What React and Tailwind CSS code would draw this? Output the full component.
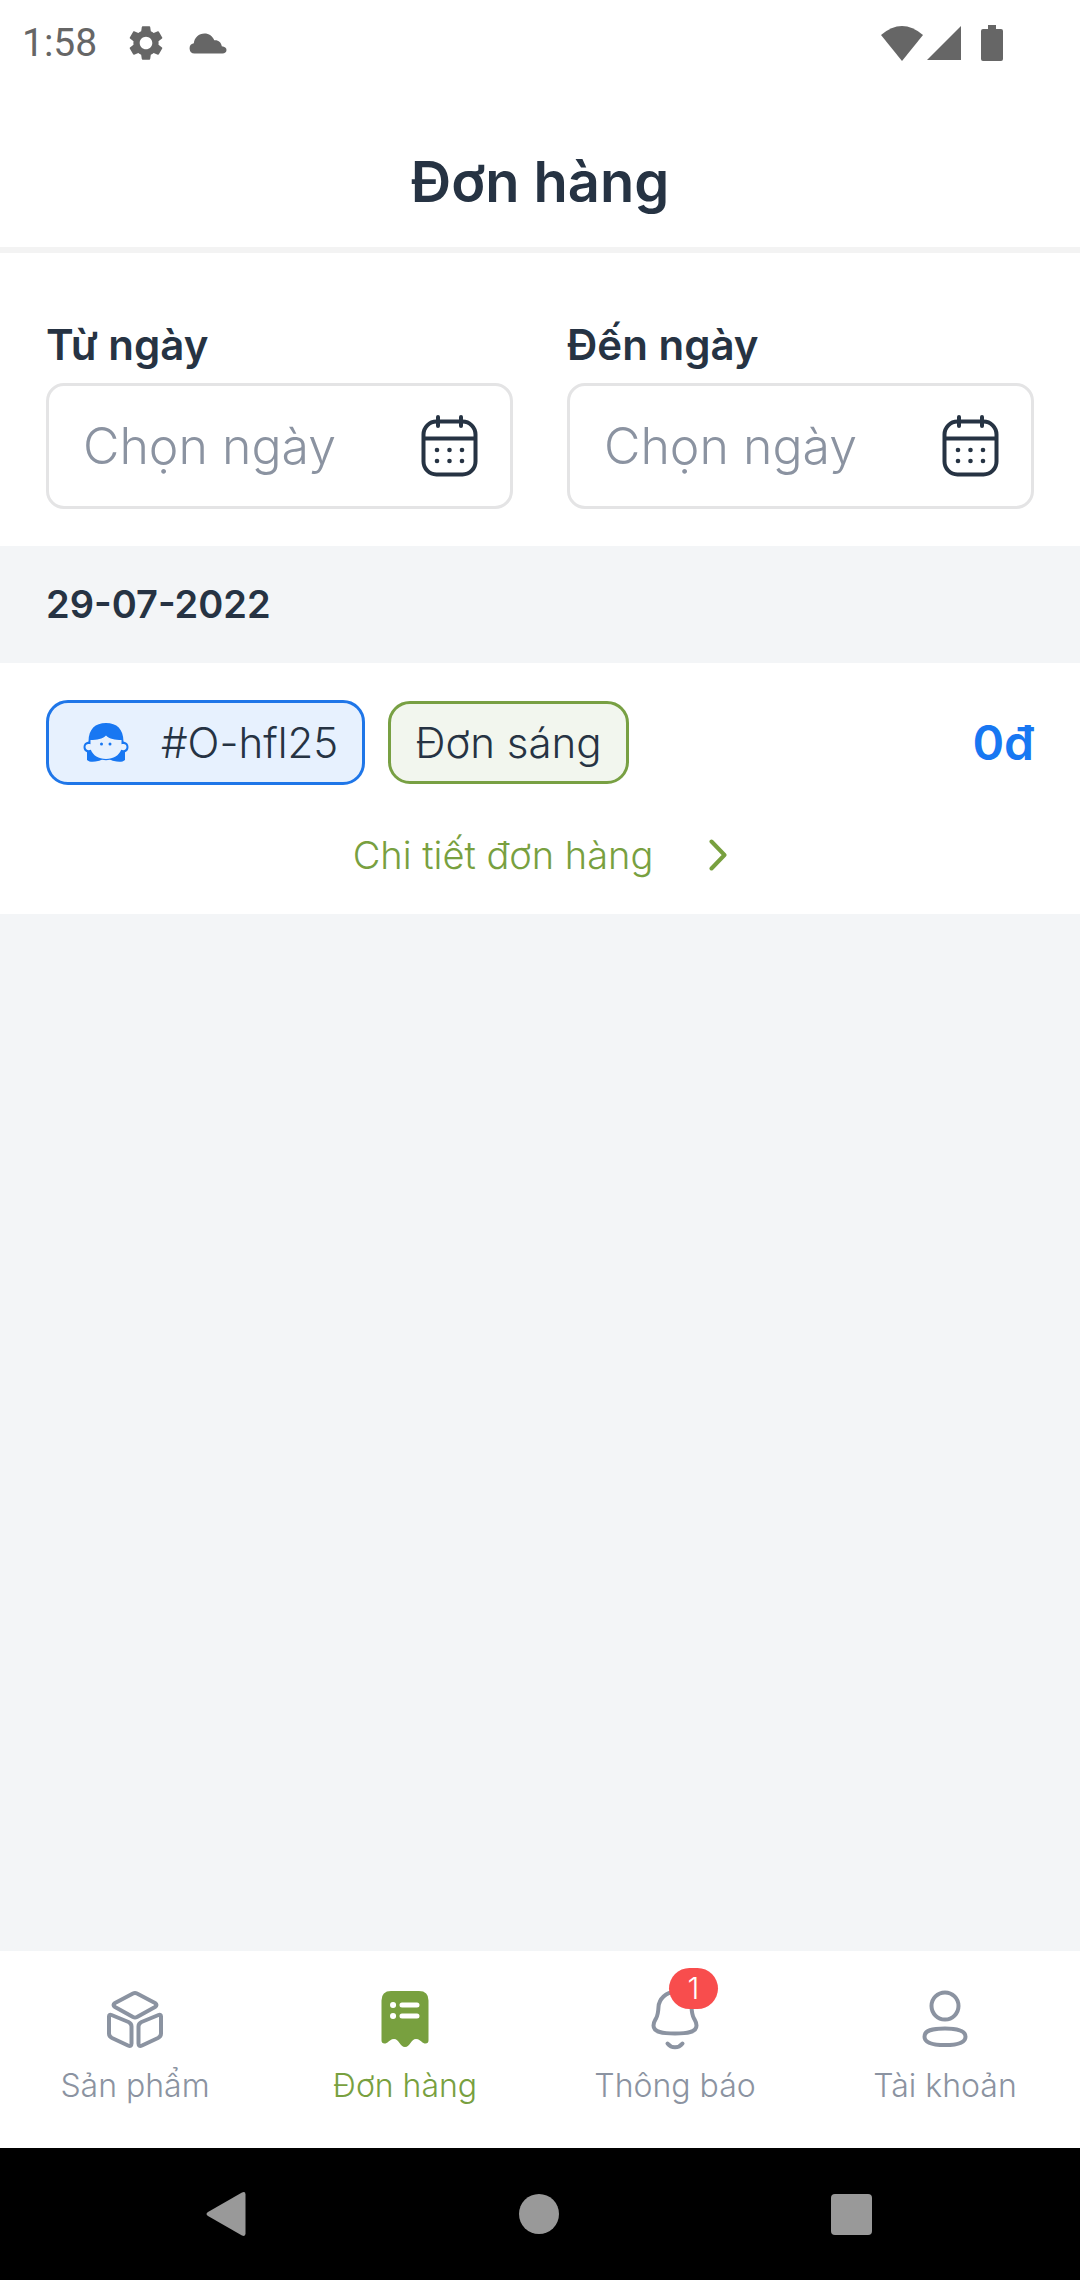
import React, { useState } from 'react';
import { MdSettings } from 'react-icons/md';

const orders = [
  { id: '#O-hfl25', session: 'Đơn sáng', total: '0đ' },
];

function CalendarIcon() {
  return (
    <svg viewBox="0 0 58 62" className="w-[58px] h-[62px]" fill="none" stroke="currentColor" strokeWidth="4" strokeLinecap="round">
      <rect x="2.5" y="6.5" width="52" height="53" rx="13" />
      <path d="M3 23.5h51M17 2v9M40 2v9" />
      <g fill="currentColor" stroke="none">
        <circle cx="16" cy="35" r="2.3" />
        <circle cx="28.5" cy="35" r="2.3" />
        <circle cx="41" cy="35" r="2.3" />
        <circle cx="16" cy="46" r="2.3" />
        <circle cx="28.5" cy="46" r="2.3" />
        <circle cx="41" cy="46" r="2.3" />
      </g>
    </svg>
  );
}

function GirlIcon() {
  return (
    <svg viewBox="0 0 46 40" className="w-[46px] h-10">
      <path fill="#1877f2" d="M23 0C12 0 5.800 6 5.500 18.500 2.500 19 .5 21 .5 24c0 2.800 1.500 4.500 3.500 5.200V37c2.500 2.500 7.500 2 11 1 2-.4 3-.8 4-1.200 2.700.6 5.300.6 8 0 1 .4 2 .8 4 1.200 3.500 1 8.500 1.500 11-1v-7.800c2-.7 3.500-2.400 3.500-5.200 0-3-2-5-5-5.500C40.200 6 34 0 23 0Z" />
      <path fill="#e7f1fe" d="M7.500 17C14 17 19.500 16 23 12.500 26.500 16 32 17 38.500 17v4.300c3-1 5 .3 5 2.700 0 2.600-2.500 4-5.300 2.800C36 32.500 30.500 36 23 36S10 32.500 7.800 26.800C5 28 2.500 26.600 2.500 24c0-2.400 2-3.700 5-2.700Z" />
      <circle cx="18.500" cy="21" r="1.500" fill="#1877f2" />
      <circle cx="27" cy="21" r="1.500" fill="#1877f2" />
    </svg>
  );
}

function BoxIcon() {
  return (
    <svg viewBox="0 0 58 58" className="w-[58px] h-[58px]" fill="none" stroke="currentColor" strokeWidth="4" strokeLinejoin="round">
      <path d="M27 3.500q2-1 4 0l18 9.500q3 2 0 4L31 27q-2 1-4 0L9 17q-3-2 0-4Z" />
      <path d="M5.500 25l17 7q3 1.500 3 4.500v17q0 3.500-3.500 2L6 48q-3-1.500-3-4.500V26.500q0-2.500 2.500-1.500Z" />
      <path d="M52.500 25l-17 7q-3 1.500-3 4.500v17q0 3.500 3.500 2L52 48q3-1.500 3-4.500V26.500q0-2.500-2.500-1.500Z" />
    </svg>
  );
}

function ReceiptIcon() {
  return (
    <svg viewBox="0 0 58 58" className="w-[58px] h-[58px]">
      <path fill="currentColor" d="M15 1h28q9.500 0 9.500 9.500v40q0 3.500-4 3l-2-1c-2-1.500-3.500-3.500-6.500-3.500-5 0-6 8-11 8s-6-8-11-8c-3 0-4.500 2-6.500 3.500l-2 1q-4 .5-4-3v-40Q5.500 1 15 1Z" />
      <g stroke="#fff" strokeWidth="5" strokeLinecap="round">
        <path d="M26 15h15M26 26h15" />
        <path strokeWidth="6" d="M17 15h.1M17 26h.1" />
      </g>
    </svg>
  );
}

function BellIcon() {
  return (
    <svg viewBox="0 0 58 60" className="w-[58px] h-[60px] -mb-0.5" fill="none" stroke="currentColor" strokeWidth="4" strokeLinecap="round">
      <path d="M29 2C20 2 13 9 12.500 17c-.3 6-.5 8-2.500 11.500C8 32 7.500 32.500 7.500 35.500c0 7 9.500 8 21.500 8s21.500-1 21.500-8c0-3-.5-3.500-2.500-7-2-3.500-2.200-5.500-2.500-11.500C45 9 38 2 29 2Z" />
      <path d="M21.500 53.500c4 5 11 5 15 0" />
    </svg>
  );
}

function UserIcon() {
  return (
    <svg viewBox="0 0 58 58" className="w-[58px] h-[58px]" fill="none" stroke="currentColor" strokeWidth="4">
      <circle cx="29" cy="16" r="13.500" />
      <path d="M29 38.500c13 0 20.500 2 20.500 8.200S42 55 29 55 8.500 53 8.500 46.700 16 38.500 29 38.500Z" />
    </svg>
  );
}

const tabs = [
  { key: 'products', label: 'Sản phẩm', Icon: BoxIcon },
  { key: 'orders', label: 'Đơn hàng', Icon: ReceiptIcon },
  { key: 'notifications', label: 'Thông báo', Icon: BellIcon, badge: 1 },
  { key: 'account', label: 'Tài khoản', Icon: UserIcon },
];

function StatusBar() {
  return (
    <div className="flex items-center h-[86px] pl-[22px] pr-[77px] text-[#666]">
      <span className="font-['Roboto',sans-serif] text-[39px] leading-none">1:58</span>
      <MdSettings className="ml-7 size-[42px]" />
      <svg viewBox="0 0 38 21" className="ml-[22px] w-[38px] h-[21px]" fill="currentColor">
        <path d="M5.500 20.500a5.200 5.200 0 0 1-.7-10.300C5.500 4.500 9.800.5 15.500.5c4.500 0 8 2.500 9.800 6.700 4.200-.4 7 2.300 7.500 6 3 .2 4.700 1.700 4.700 3.800 0 2-1.700 3.500-4 3.500Z" />
      </svg>
      <svg viewBox="0 0 42 35" className="ml-auto w-[42px] h-[35px]" fill="currentColor">
        <path d="M0 9Q21-9 42 9L21 35Z" />
      </svg>
      <svg viewBox="0 0 34 34" className="ml-1 size-[34px]" fill="currentColor">
        <path d="M34 0v34H0Z" />
      </svg>
      <svg viewBox="0 0 22 36" className="ml-5 w-[22px] h-9" fill="currentColor">
        <path d="M7 0h8v4h5q2 0 2 2v28q0 2-2 2H2q-2 0-2-2V6q0-2 2-2h5Z" />
      </svg>
    </div>
  );
}

function DateField({ id, label }) {
  return (
    <div className="flex-1 min-w-0">
      <label htmlFor={id} className="block text-[42px] leading-[48px] font-semibold">{label}</label>
      <div className="mt-3.5 flex items-center h-[126px] pl-[34px] pr-[31px] border-[3px] border-[#e4e4e5] rounded-[18px]">
        <input
          id={id}
          type="text"
          placeholder="Chọn ngày"
          className="flex-1 min-w-0 h-full text-[50px] font-light outline-none placeholder:text-[#8b93a1]"
        />
        <button type="button" aria-label={`Mở lịch ${label}`}>
          <CalendarIcon />
        </button>
      </div>
    </div>
  );
}

function OrderCard({ order }) {
  return (
    <li className="bg-white pt-[37px] pb-[27px] px-[46px]">
      <div className="flex items-center">
        <span className="flex items-center h-[85px] pl-[34px] pr-6 border-[3px] border-[#1f76e8] rounded-[22px] bg-[#e7f1fe]">
          <GirlIcon />
          <span className="ml-8 text-[42px] leading-none font-light">{order.id}</span>
        </span>
        <span className="ml-[23px] flex items-center h-[83px] px-6 border-[3px] border-[#78a043] rounded-[22px] bg-[#f2f6ee] text-[42px] leading-none font-light">
          {order.session}
        </span>
        <span className="ml-auto text-[48px] leading-none font-semibold text-[#1877f2]">{order.total}</span>
      </div>
      <a href="#detail" className="mt-[38px] flex h-16 items-center justify-center gap-14 text-[38px] font-light text-[#78a03f]">
        Chi tiết đơn hàng
        <svg viewBox="0 0 18 32" className="w-[18px] h-8" fill="none" stroke="currentColor" strokeWidth="4" strokeLinecap="round" strokeLinejoin="round">
          <path d="M2.500 2.500 15.500 16 2.500 29.500" />
        </svg>
      </a>
    </li>
  );
}

function TabBar({ active, onChange }) {
  return (
    <nav className="flex bg-white pt-9 pb-[42px]">
      {tabs.map(({ key, label, Icon, badge }) => (
        <button
          key={key}
          type="button"
          onClick={() => onChange(key)}
          className={`flex-1 flex flex-col items-center ${active === key ? 'text-[#78a03f]' : 'text-[#8b93a1]'}`}
        >
          <span className="relative mt-[3px]">
            <Icon />
            {badge && (
              <span className="absolute -top-[22px] left-[23px] w-[49px] h-[41px] rounded-full bg-[#f84d4d] text-white text-[30px] leading-[41px] font-light">
                {badge}
              </span>
            )}
          </span>
          <span className="mt-[18px] text-[32px] leading-10 font-light">{label}</span>
        </button>
      ))}
    </nav>
  );
}

function SystemNav() {
  return (
    <div className="flex h-[132px] items-center justify-between bg-black pl-[206px] pr-[208px] text-[#999]">
      <button type="button" aria-label="Quay lại">
        <svg viewBox="0 0 40 46" className="w-10 h-[46px]" fill="currentColor">
          <path d="M2 21 36 1.500q3.500-1.500 3.500 2v39q0 3.500-3.500 2L2 25q-3-2 0-4Z" />
        </svg>
      </button>
      <button type="button" aria-label="Trang chủ" className="size-10 rounded-full bg-[#999]" />
      <button type="button" aria-label="Đa nhiệm" className="size-[41px] rounded-[4px] bg-[#999]" />
    </div>
  );
}

export default function App() {
  const [tab, setTab] = useState('orders');

  return (
    <div className="min-h-screen flex flex-col bg-[#f3f5f7] text-[#263343] font-['Inter','Noto_Sans',sans-serif]">
      <header className="bg-white border-b-[6px] border-[#f3f3f3]">
        <StatusBar />
        <h1 className="h-[161px] pt-16 text-center text-[56px] leading-[64px] font-semibold">Đơn hàng</h1>
      </header>
      <main className="flex-1">
        <form className="flex gap-[54px] bg-white px-[46px] pt-[68px] pb-[37px]">
          <DateField id="from-date" label="Từ ngày" />
          <DateField id="to-date" label="Đến ngày" />
        </form>
        <h2 className="h-[117px] px-[46px] text-[38px] leading-[117px] font-semibold">29-07-2022</h2>
        <ul>
          {orders.map((o) => (
            <OrderCard key={o.id} order={o} />
          ))}
        </ul>
      </main>
      <TabBar active={tab} onChange={setTab} />
      <SystemNav />
    </div>
  );
}
